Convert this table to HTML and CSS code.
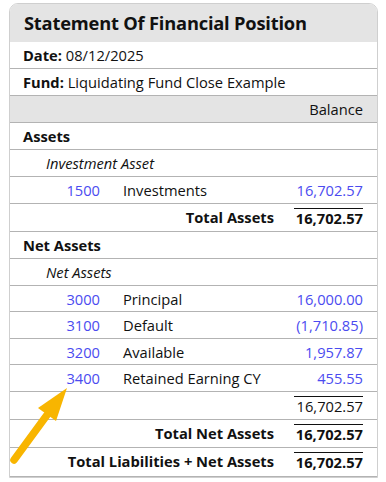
FILE: index.html
```html
<!DOCTYPE html>
<html>
<head>
<meta charset="utf-8">
<link rel="stylesheet" href="styles.css">
</head>
<body>
<div class="card">
  <div class="title">Statement Of Financial Position</div>
  <div class="row info"><b>Date:</b>&nbsp;08/12/2025</div>
  <div class="row info"><b>Fund:</b>&nbsp;Liquidating Fund Close Example</div>
  <div class="row colhead"><span class="amt">Balance</span></div>
  <div class="row section">Assets</div>
  <div class="row group">Investment Asset</div>
  <div class="row line"><span class="num link">1500</span><span class="name">Investments</span><span class="amt link">16,702.57</span></div>
  <div class="row total"><span class="tlabel">Total Assets</span><span class="amt sum">16,702.57</span></div>
  <div class="row section">Net Assets</div>
  <div class="row group">Net Assets</div>
  <div class="row line"><span class="num link">3000</span><span class="name">Principal</span><span class="amt link">16,000.00</span></div>
  <div class="row line"><span class="num link">3100</span><span class="name">Default</span><span class="amt link">(1,710.85)</span></div>
  <div class="row line"><span class="num link">3200</span><span class="name">Available</span><span class="amt link">1,957.87</span></div>
  <div class="row line"><span class="num link">3400</span><span class="name">Retained Earning CY</span><span class="amt link">455.55</span></div>
  <div class="row subtotal"><span class="amt sum">16,702.57</span></div>
  <div class="row total"><span class="tlabel">Total Net Assets</span><span class="amt sum">16,702.57</span></div>
  <div class="row total last"><span class="tlabel">Total Liabilities + Net Assets</span><span class="amt sum">16,702.57</span></div>
</div>
<svg class="arrow" width="386" height="482" viewBox="0 0 386 482">
  <line x1="14" y1="460" x2="47" y2="415" stroke="#f8b500" stroke-width="7.5" stroke-linecap="round"/>
  <polygon points="67,388 38,408 56,421" fill="#f8b500"/>
</svg>
</body>
</html>
```
FILE: styles.css
```css
html, body {
  margin: 0;
  padding: 0;
  background: #fff;
}
body {
  font-family: "Open Sans", "Noto Sans", sans-serif;
  font-size: 14.7px;
  color: #111;
  position: relative;
  width: 386px;
  height: 482px;
  overflow: hidden;
}
.card {
  margin: 3px 0 0 9px;
  width: 367px;
  border: 1px solid #cfcfcf;
  border-radius: 9px 9px 0 0;
  overflow: hidden;
}
.title {
  background: #e4e4e4;
  height: 38px;
  padding: 0 14px;
  font-size: 18.3px;
  font-weight: 700;
  line-height: 38px;
  letter-spacing: -0.2px;
}
.row {
  display: grid;
  grid-template-columns: 76px 1fr 69px;
  padding: 4px 14px;
  line-height: 18px;
  min-height: 18px;
  border-bottom: 1px solid #b3b3b3;
  align-items: center;
}
.row.info {
  display: block;
  padding-left: 13px;
}
.row.info b { font-weight: 700; }
.colhead {
  background: #e4e4e4;
}
.section {
  display: block;
  font-weight: 700;
  padding-left: 13px;
}
.group {
  display: block;
  font-style: italic;
  padding-left: 36px;
}
.line {
  padding-bottom: 3.5px;
}
.num {
  grid-column: 1;
  text-align: right;
}
.name {
  grid-column: 2;
  padding-left: 23px;
}
.amt {
  grid-column: 3;
  text-align: right;
}
.link { color: #4b4bf0; }
.tlabel {
  grid-column: 1 / 3;
  text-align: right;
  font-weight: 700;
  padding-right: 20px;
}
.sum {
  border-top: 1px solid #111;
}
.total .sum { font-weight: 700; }
.last {
  padding-bottom: 5px;
}
.arrow {
  position: absolute;
  left: 0;
  top: 0;
  pointer-events: none;
}
```
